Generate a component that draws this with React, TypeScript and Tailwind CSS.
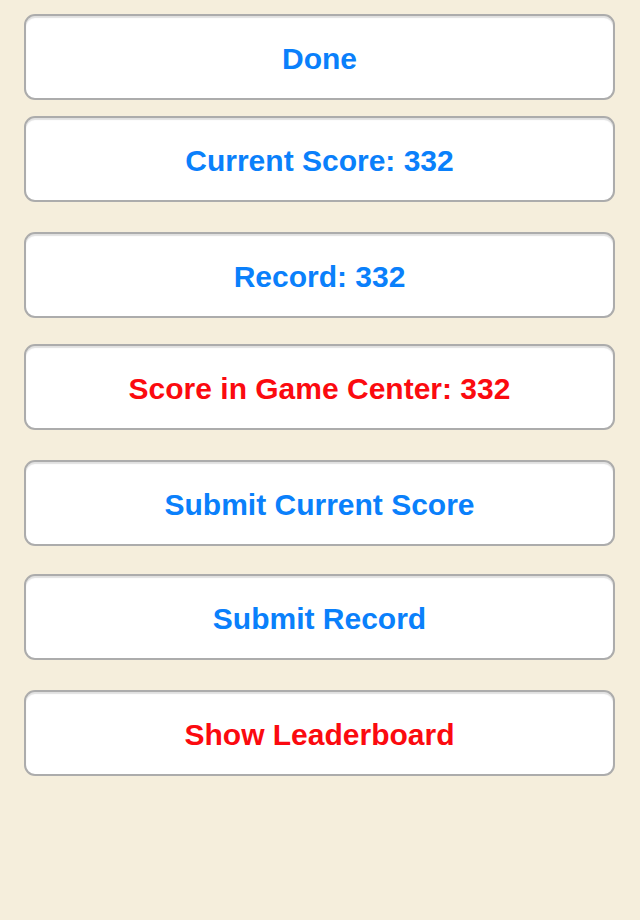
const buttons = [
  { label: 'Done', red: false, mt: 'mt-[14px]' },
  { label: 'Current Score: 332', red: false, mt: 'mt-[16px]' },
  { label: 'Record: 332', red: false, mt: 'mt-[30px]' },
  { label: 'Score in Game Center: 332', red: true, mt: 'mt-[26px]' },
  { label: 'Submit Current Score', red: false, mt: 'mt-[30px]' },
  { label: 'Submit Record', red: false, mt: 'mt-[28px]' },
  { label: 'Show Leaderboard', red: true, mt: 'mt-[30px]' },
];

export default function App() {
  return (
    <div
      className="w-[640px] h-[920px] bg-[#f5eedc] flex flex-col px-[24px]"
      style={{ fontFamily: '"Liberation Sans", Arial, sans-serif' }}
    >
      {buttons.map((b) => (
        <button
          key={b.label}
          className={`${b.mt} w-[591px] h-[86px] shrink-0 rounded-[11px] border-2 border-[#acacac] bg-white shadow-[inset_0_2px_1px_rgba(0,0,0,0.12)] flex items-center justify-center pt-[3px] text-[30px] font-bold ${
            b.red ? 'text-[#fb0a0f]' : 'text-[#0a80fb]'
          }`}
        >
          {b.label}
        </button>
      ))}
    </div>
  );
}
